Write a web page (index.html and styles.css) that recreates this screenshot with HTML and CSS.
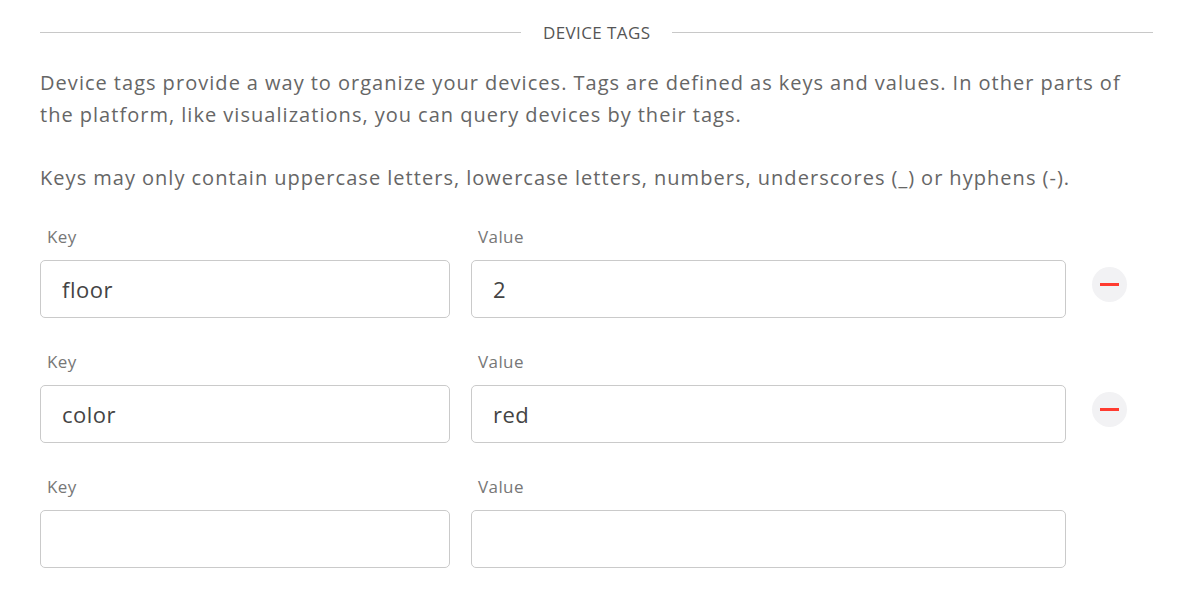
FILE: index.html
```html
<!DOCTYPE html>
<html>
<head>
<meta charset="utf-8">
<link rel="stylesheet" href="styles.css">
</head>
<body>
<div class="section">
  <div class="divider">
    <span class="rule"></span>
    <span class="title">DEVICE TAGS</span>
    <span class="rule"></span>
  </div>
  <p class="desc">Device tags provide a way to organize your devices. Tags are defined as keys and values. In other parts of the platform, like visualizations, you can query devices by their tags.</p>
  <p class="desc second">Keys may only contain uppercase letters, lowercase letters, numbers, underscores (_) or hyphens (-).</p>

  <div class="tags">
    <div class="tag-row">
      <label class="field key"><span class="label">Key</span><input class="input" value="floor"></label>
      <label class="field value"><span class="label">Value</span><input class="input" value="2"></label>
      <div class="action"><button class="remove" aria-label="Remove"><span class="bar"></span></button></div>
    </div>
    <div class="tag-row">
      <label class="field key"><span class="label">Key</span><input class="input" value="color"></label>
      <label class="field value"><span class="label">Value</span><input class="input" value="red"></label>
      <div class="action"><button class="remove" aria-label="Remove"><span class="bar"></span></button></div>
    </div>
    <div class="tag-row">
      <label class="field key"><span class="label">Key</span><input class="input" value=""></label>
      <label class="field value"><span class="label">Value</span><input class="input" value=""></label>
      <div class="action"></div>
    </div>
  </div>
</div>
</body>
</html>
```
FILE: styles.css
```css
html, body {
  margin: 0;
  padding: 0;
  background: #fff;
}
body {
  font-family: "Open Sans", "Noto Sans", sans-serif;
  color: #666;
}
.section {
  padding: 19px 47px 0 40px;
}
.divider {
  display: flex;
  align-items: center;
  gap: 22px;
  height: 26px;
}
.rule {
  flex: 1;
  height: 1px;
  background: #c8c8c8;
}
.divider .rule:first-child {
  flex: 0 0 481px;
}
.title {
  font-size: 17px;
  color: #555;
  letter-spacing: 0.4px;
}
.desc {
  margin: 22px 0 0 0;
  font-size: 20px;
  line-height: 32px;
  color: #666;
  letter-spacing: 1.05px;
  word-spacing: -0.3px;
}
.desc.second {
  margin-top: 31px;
}
.tags {
  margin-top: 32px;
  display: flex;
  flex-direction: column;
  gap: 33px;
}
.tag-row {
  display: flex;
  gap: 21px;
  align-items: flex-end;
}
.field {
  display: flex;
  flex-direction: column;
  gap: 12px;
}
.field.key { width: 410px; }
.field.value { width: 595px; }
.label {
  font-size: 17px;
  color: #777;
  padding-left: 7px;
  line-height: 22px;
  letter-spacing: 0.4px;
}
.input {
  box-sizing: border-box;
  height: 58px;
  width: 100%;
  border: 1.5px solid #cacaca;
  border-radius: 5px;
  padding: 0 21px;
  font-family: inherit;
  font-size: 22px;
  letter-spacing: 0.5px;
  color: #444;
  background: #fff;
  outline: none;
}
.action {
  width: 86px;
  height: 58px;
  display: flex;
  align-items: center;
  justify-content: center;
  margin-left: -21px;
  padding-bottom: 10px;
  box-sizing: border-box;
}
.remove {
  width: 35px;
  height: 35px;
  border-radius: 50%;
  border: none;
  background: #f2f2f4;
  padding: 0;
  display: flex;
  align-items: center;
  justify-content: center;
  cursor: pointer;
}
.bar {
  display: block;
  width: 19px;
  height: 3px;
  background: #ff3b30;
}
```
